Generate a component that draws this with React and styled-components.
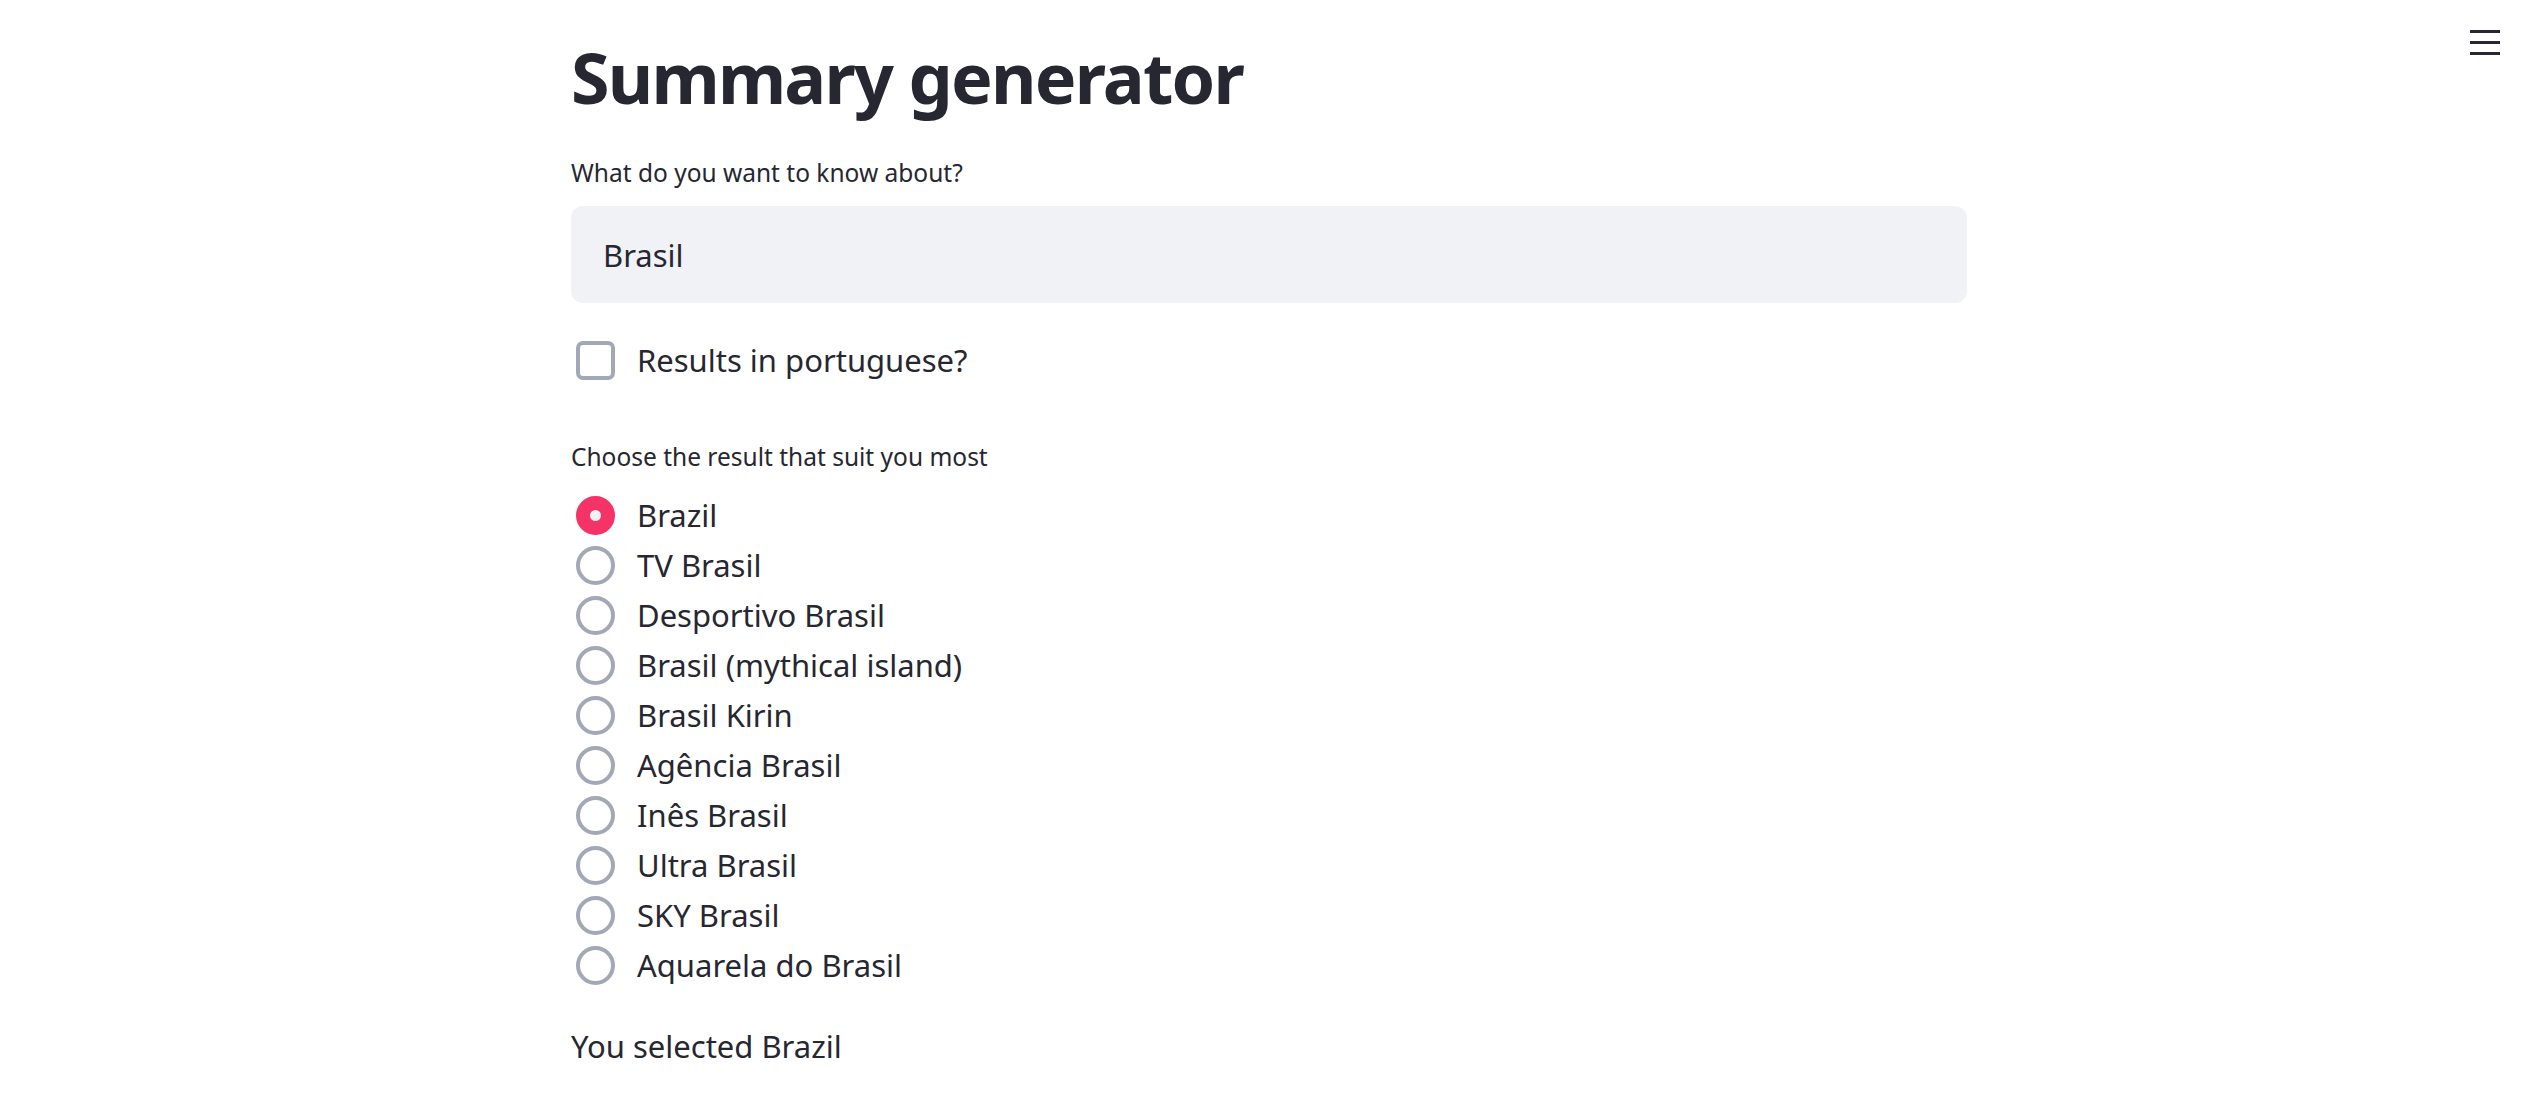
import styled, { createGlobalStyle } from "styled-components";
import { useState } from "react";

const GlobalStyle = createGlobalStyle`
  body {
    margin: 0;
    background: #ffffff;
    font-family: "Noto Sans", "Liberation Sans", sans-serif;
    color: #262730;
  }
`;

const options = [
  "Brazil",
  "TV Brasil",
  "Desportivo Brasil",
  "Brasil (mythical island)",
  "Brasil Kirin",
  "Agência Brasil",
  "Inês Brasil",
  "Ultra Brasil",
  "SKY Brasil",
  "Aquarela do Brasil",
];

const MenuIcon = () => (
  <svg width="30" height="26" viewBox="0 0 30 26">
    <rect x="0" y="0" width="30" height="3" fill="#262730" />
    <rect x="0" y="11" width="30" height="3" fill="#262730" />
    <rect x="0" y="22" width="30" height="3" fill="#262730" />
  </svg>
);

const App = () => {
  const [query, setQuery] = useState("Brasil");
  const [portuguese, setPortuguese] = useState(false);
  const [selected, setSelected] = useState("Brazil");

  return (
    <>
      <GlobalStyle />
      <MenuButton aria-label="menu">
        <MenuIcon />
      </MenuButton>
      <Main>
        <Title>Summary generator</Title>

        <FieldLabel>What do you want to know about?</FieldLabel>
        <TextInput value={query} onChange={(e) => setQuery(e.target.value)} />

        <CheckRow onClick={() => setPortuguese(!portuguese)}>
          <CheckBox checked={portuguese} />
          <OptionText>Results in portuguese?</OptionText>
        </CheckRow>

        <FieldLabel gap="57px">Choose the result that suit you most</FieldLabel>
        <RadioList>
          {options.map((opt) => (
            <RadioRow key={opt} onClick={() => setSelected(opt)}>
              <RadioCircle checked={selected === opt} />
              <OptionText>{opt}</OptionText>
            </RadioRow>
          ))}
        </RadioList>

        <ResultText>You selected {selected}</ResultText>
      </Main>
    </>
  );
};

export default App;

const MenuButton = styled.button`
  position: fixed;
  top: 30px;
  right: 38px;
  padding: 0;
  border: none;
  background: none;
  cursor: pointer;
  line-height: 0;
`;

const Main = styled.main`
  width: 1396px;
  margin: 0 auto;
  padding-top: 34px;
`;

const Title = styled.h1`
  margin: 0;
  font-size: 70px;
  line-height: 86px;
  font-weight: 700;
  letter-spacing: -1.8px;
  color: #262730;
`;

const FieldLabel = styled.div`
  margin-top: ${({ gap }) => gap ?? "33px"};
  margin-bottom: 13px;
  font-size: 24.5px;
  line-height: 40px;
  color: #262730;
`;

const TextInput = styled.input`
  display: block;
  box-sizing: border-box;
  width: 100%;
  height: 97px;
  padding: 0 32px;
  border: none;
  border-radius: 12px;
  background: #f0f2f6;
  font-family: inherit;
  font-size: 31px;
  color: #262730;
  outline: none;
`;

const CheckRow = styled.label`
  display: flex;
  align-items: center;
  gap: 22px;
  height: 40px;
  margin-top: 37px;
  padding-left: 5px;
  cursor: pointer;
`;

const CheckBox = styled.span`
  box-sizing: border-box;
  width: 39px;
  height: 39px;
  border: 4px solid ${({ checked }) => (checked ? "#f63366" : "#a3a8b8")};
  border-radius: 7px;
  background: ${({ checked }) => (checked ? "#f63366" : "#ffffff")};
`;

const OptionText = styled.span`
  font-size: 31px;
  line-height: 40px;
  color: #262730;
`;

const RadioList = styled.div`
  display: flex;
  flex-direction: column;
`;

const RadioRow = styled.label`
  display: flex;
  align-items: center;
  gap: 22px;
  height: 50px;
  padding-left: 5px;
  cursor: pointer;
`;

const RadioCircle = styled.span`
  box-sizing: border-box;
  width: 39px;
  height: 39px;
  border-radius: 50%;
  border: ${({ checked }) =>
    checked ? "14px solid #f63366" : "4px solid #a3a8b8"};
  background: ${({ checked }) => (checked ? "#f0f2f6" : "#ffffff")};
`;

const ResultText = styled.p`
  margin: 32px 0 0;
  font-size: 31px;
  line-height: 48px;
  color: #262730;
`;
